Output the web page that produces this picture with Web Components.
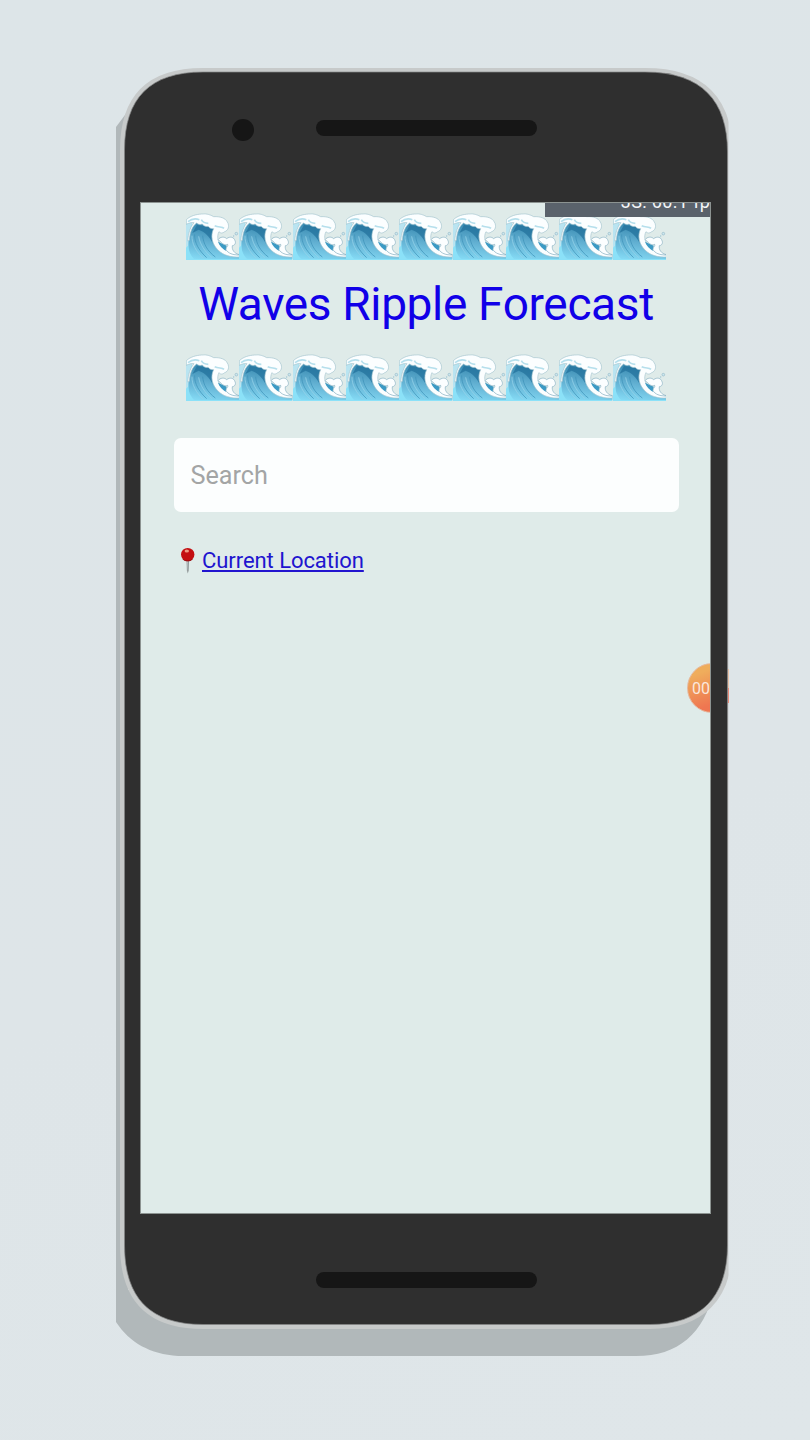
<!DOCTYPE html>
<html lang="en">
<head>
<meta charset="utf-8">
<title>Waves Ripple Forecast</title>
<style>
html,body{margin:0;height:100%;background:#dfe5e9}
body{font-family:Roboto,"Liberation Sans",sans-serif;overflow:hidden}
</style>
</head>
<body>
<phone-frame>
  <forecast-screen></forecast-screen>
</phone-frame>

<template id="phone">
<style>
:host{display:block;position:relative;width:810px;height:1440px;box-sizing:border-box;padding:0 99px 0 140px;background:linear-gradient(160deg,#dde5e8,#dee5e8 60%,#dfe6e9)}
.case{position:absolute;inset:0;display:block}
.stack{position:relative;display:flex;flex-direction:column;height:100%}
.top{height:202px;box-sizing:border-box;padding:119px 0 0 92px;display:flex;align-items:flex-start}
.cam{width:22px;height:22px;border-radius:50%;background:#161616}
.bar{width:221px;height:16px;border-radius:8px;background:#161616}
.top .bar{margin:1px 0 0 62px}
.view{height:1012px;width:571px;display:block}
.bottom{padding:58px 0 0 176px}
</style>
<svg class="case" width="810" height="1440" viewBox="0 0 810 1440">
  <defs><clipPath id="edge"><rect x="116" y="60" width="612.5" height="1310"/></clipPath></defs>
  <path fill="#b1b8ba" d="M116 127 L128 111 V1290 H714 C704 1334 678 1356 636 1356 H178 C150 1354 130 1343 116 1322Z"/>
  <g clip-path="url(#edge)">
    <path fill="#c7caca" stroke="#c7caca" stroke-width="9" d="M124.5 150 C124.5 98 150 72.500 203 72.500 H645 C702 72.500 728 101 728 152 V1245 C728 1298 700 1324.500 650 1324.500 H203 C150 1324.500 124.500 1298 124.500 1245Z"/>
    <path fill="#2f2f2f" stroke="#858787" stroke-width=".7" d="M124.500 150 C124.500 98 150 72 203 72 H645 C702 72 727.500 101 727.500 152 V1245 C727.500 1298 700 1324.500 650 1324.500 H203 C150 1324.500 124.500 1298 124.500 1245Z"/>
  </g>
  <path fill="#e8c3a8" d="M728 669 h1 v19 h-1z"/><path fill="#e98c7a" d="M728 688 h1 v15 h-1z"/>
</svg>
<div class="stack">
  <div class="top"><div class="cam"></div><div class="bar"></div></div>
  <div class="view"><slot></slot></div>
  <div class="bottom"><div class="bar"></div></div>
</div>
</template>

<template id="wave">
<style>:host{display:flex;width:480px;height:48px}svg{display:block;flex:none}</style>
</template>

<template id="pin">
<style>:host{display:block;width:16px;height:28px}svg{display:block}</style>
<svg width="16" height="28" viewBox="0 0 16 28">
  <path d="M6.500 13h2.600l-.4 10.500-.9 3-.9-3z" fill="#919899"/><path d="M7.200 14h.8v11z" fill="#c6cccc"/>
  <circle cx="7.700" cy="7.600" r="6.700" fill="#c40f12"/>
  <path d="M2 11.500c3 2.500 8 2.500 11.300 0-2.400 3.700-8.700 3.900-11.300 0z" fill="#930c10"/>
  <ellipse cx="6.800" cy="3.900" rx="2.200" ry="1.500" fill="#ee9a83"/>
</svg>
</template>

<template id="screen">
<style>
:host{display:block;position:relative;width:571px;height:1012px;box-sizing:border-box;overflow:hidden;background:#dfebe9;border:1px solid #8c9391;padding:10px 31px 0 32px}
header{display:flex;flex-direction:column;align-items:center}
h1{margin:0;height:93px;line-height:86px;font-size:46px;font-weight:400;letter-spacing:-.35px;color:#1100e8;white-space:nowrap}
.search{margin:36px 0 0 .5px;height:74px;box-sizing:border-box;border-radius:7px;background:#fcfefe;display:flex;align-items:center;padding:1px 17px 0;font-size:25.200px;color:#a3a5a5}
.loc{display:flex;align-items:flex-start;margin:35px 0 0 7px}
.loc a{margin-left:6px;font-size:22px;line-height:28px;letter-spacing:-.06px;color:#2114cf;text-decoration:underline;text-decoration-thickness:1.500px;text-underline-offset:2px;white-space:nowrap}
.fps{position:absolute;left:404px;top:-1px;width:166px;height:15px;overflow:hidden;background:#5a626b;color:#f4f6f7;font-size:18px;line-height:20px;white-space:nowrap}
.fps span{display:block;margin:-10px 0 0 76px;letter-spacing:.35px}
.timer{position:absolute;left:546px;top:460px;width:50px;height:50px;box-sizing:border-box;border-radius:50%;border:1px solid #e5b9a0;background:linear-gradient(160deg,#efad5c 20%,#ef7651 75%);color:#fbe7dc;font-size:16px;line-height:49px;padding-left:4px}
</style>
<header>
  <wave-row></wave-row>
  <h1>Waves Ripple Forecast</h1>
  <wave-row></wave-row>
</header>
<div class="search">Search</div>
<div class="loc"><pin-icon></pin-icon><a>Current Location</a></div>
<div class="fps"><span>JS: 60.1 fps</span></div>
<div class="timer">00</div>
</template>

<script>
const stamp = (el, id) => {
  const root = el.attachShadow({mode: 'open'});
  root.append(document.getElementById(id).content.cloneNode(true));
  return root;
};
const waveSvg = `<svg width="53.33" height="48" viewBox="0 0 160 144" preserveAspectRatio="none">
<defs><linearGradient id="g" x1=".2" y1="0" x2="0" y2="1"><stop offset="0" stop-color="#3486ad"/><stop offset=".5" stop-color="#62b0d2"/><stop offset="1" stop-color="#86dcf6"/></linearGradient></defs>
<path fill="#8be1f8" d="M0 24L16 20 20 60 12 112 60 125 110 114 160 130V141H0z"/>
<path fill="#b9e4f1" d="M0 24L18 22 14 60 6 98 0 104z"/>
<path fill="url(#g)" d="M9 112C4 76 12 44 32 28L92 44C80 62 80 88 96 106 112 124 136 132 160 131V138H24C16 130 12 122 9 112z"/>
<path fill="#23719c" opacity=".75" d="M19 60L33 36 84 44C76 60 76 80 82 94 72 72 56 56 38 50z"/>
<path fill="none" stroke="#94d2e8" stroke-width="3" opacity=".8" d="M18 68C17 92 30 116 52 136M38 70C42 94 56 116 78 134"/>
<path fill="none" stroke="#3c90b8" stroke-width="3" opacity=".7" d="M26 64C25 88 38 112 62 134M50 68C52 92 64 114 88 132"/>
<path fill="#fbfeff" stroke="#a5c4cf" stroke-width="2" d="M1 20C14 8 31 4 47 3 61 1 73 5 83 11 103 10 118 15 124 27 132 40 126 53 116 56 110 62 102 61 99 56 92 69 95 86 106 99 120 115 138 124 160 126V132C134 133 112 127 96 111 77 92 73 68 83 47 75 48 69 44 66 40 59 42 52 38 49 33 42 36 36 34 32 30 18 40 12 58 10 82L5 84C7 62 12 42 24 29 16 28 8 30 1 34z"/>
<path fill="none" stroke="#b5dfec" stroke-width="5" d="M6 26C18 16 30 16 40 20M46 20C50 28 58 31 67 31M86 38C98 44 108 40 114 46"/>
<path fill="#3c9ac4" d="M96 86L122 98 119 113C109 107 100 98 96 86z"/>
<path fill="#fbfeff" stroke="#86afc1" stroke-width="2" d="M96 80C103 71 115 70 122 77 132 69 144 72 147 83 151 91 145 98 139 98 137 110 144 121 160 125 143 128 124 120 120 109 120 102 128 99 125 94 117 98 107 91 104 86z"/>
<circle cx="151" cy="62" r="4" fill="#cce7ef" stroke="#82aabb" stroke-width="1.500"/><circle cx="143" cy="69" r="2" fill="#9cc5d4"/>
</svg>`;
customElements.define('wave-row', class extends HTMLElement {
  constructor(){ super(); const root = stamp(this, 'wave'); root.innerHTML += waveSvg.repeat(9); }
});
customElements.define('pin-icon', class extends HTMLElement { constructor(){ super(); stamp(this, 'pin'); } });
customElements.define('forecast-screen', class extends HTMLElement { constructor(){ super(); stamp(this, 'screen'); } });
customElements.define('phone-frame', class extends HTMLElement { constructor(){ super(); stamp(this, 'phone'); } });
</script>
</body>
</html>
